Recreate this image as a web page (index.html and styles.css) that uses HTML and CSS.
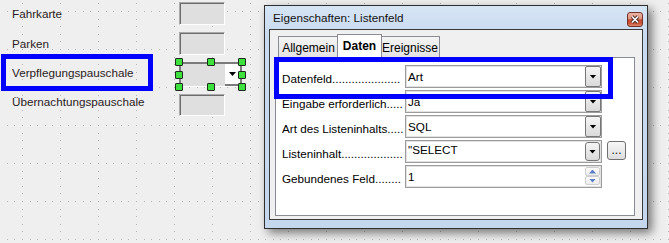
FILE: index.html
```html
<!DOCTYPE html>
<html lang="de">
<head>
<meta charset="utf-8">
<title>Eigenschaften: Listenfeld</title>
<link rel="stylesheet" href="styles.css">
</head>
<body>
<div class="canvas">
  <svg class="grid" width="669" height="243" aria-hidden="true">
    <defs>
      <pattern id="dots" patternUnits="userSpaceOnUse" x="22" y="11" width="38" height="38">
        <rect class="dot" x="0" y="0" width="1" height="1"/>
        <rect class="dot" x="8" y="0" width="1" height="1"/>
        <rect class="dot" x="15" y="0" width="1" height="1"/>
        <rect class="dot" x="23" y="0" width="1" height="1"/>
        <rect class="dot" x="30" y="0" width="1" height="1"/>
        <rect class="dot" x="0" y="8" width="1" height="1"/>
        <rect class="dot" x="0" y="15" width="1" height="1"/>
        <rect class="dot" x="0" y="23" width="1" height="1"/>
        <rect class="dot" x="0" y="30" width="1" height="1"/>
      </pattern>
    </defs>
    <rect width="669" height="243" fill="url(#dots)"/>
  </svg>

  <div class="form">
    <div class="lbl">Fahrkarte</div>
    <div class="field"></div>
    <div class="lbl">Parken</div>
    <div class="field"></div>
    <div class="lbl lbl-sel">Verpflegungspauschale</div>
    <div class="sel-wrap">
      <div class="sel"><div class="sel-btn"><i class="tri"></i></div></div>
      <span class="h h1"></span><span class="h h2"></span><span class="h h3"></span>
      <span class="h h4"></span><span class="h h5"></span>
      <span class="h h6"></span><span class="h h7"></span><span class="h h8"></span>
    </div>
    <div class="lbl lbl-top">Übernachtungspauschale</div>
    <div class="field"></div>
  </div>

  <div class="window">
    <div class="titlebar">
      <span class="title">Eigenschaften: Listenfeld</span>
      <span class="close">
        <svg width="10" height="9" viewBox="0 0 10 9">
          <path d="M2 1.5 L8 7.5 M8 1.5 L2 7.5" stroke="#4a2a24" stroke-width="3.4" fill="none"/>
          <path d="M2 1.5 L8 7.5 M8 1.5 L2 7.5" stroke="#ffffff" stroke-width="1.6" fill="none"/>
        </svg>
      </span>
    </div>
    <div class="client">
      <div class="tabs">
        <div class="tab tab-a">Allgemein</div>
        <div class="tab active">Daten</div>
        <div class="tab tab-e">Ereignisse</div>
      </div>
      <div class="page">
        <div class="row">
          <span class="plabel">Datenfeld.....................</span>
          <div class="combo"><span class="val">Art</span><span class="dd"><i class="tri"></i></span></div>
        </div>
        <div class="row">
          <span class="plabel">Eingabe erforderlich.....</span>
          <div class="combo"><span class="val">Ja</span><span class="dd"><i class="tri"></i></span></div>
        </div>
        <div class="row">
          <span class="plabel">Art des Listeninhalts.....</span>
          <div class="combo"><span class="val">SQL</span><span class="dd"><i class="tri"></i></span></div>
        </div>
        <div class="row">
          <span class="plabel">Listeninhalt...................</span>
          <div class="combo multi"><span class="val">"SELECT
"Art", "ID" FROM "Art" ORDER BY "Art"</span><span class="dd dd-round"><i class="tri"></i></span></div>
          <span class="more">...</span>
        </div>
        <div class="row">
          <span class="plabel">Gebundenes Feld........</span>
          <div class="combo"><span class="val">1</span><span class="spin"><span class="sb"><i class="up"></i></span><span class="sb"><i class="down"></i></span></span></div>
        </div>
      </div>
    </div>
  </div>

  <div class="mark mark-left"></div>
  <div class="mark mark-right"></div>
</div>
</body>
</html>
```

FILE: styles.css
```css
* { box-sizing: border-box; }
html, body { margin: 0; padding: 0; }
body {
  background: #efefef;
  font-family: "Liberation Sans", Arial, sans-serif;
  font-size: 11.7px;
  color: #000;
}
.canvas {
  position: relative;
  width: 669px;
  height: 243px;
  overflow: hidden;
  background: #efefef;
}
.grid { position: absolute; left: 0; top: 0; }
.grid .dot { fill: #b4b4b4; }

/* form designer controls */
.form {
  position: relative;
  display: grid;
  grid-template-columns: 167px 63px;
  grid-template-rows: 23px 23px 25px 22px;
  row-gap: 7px;
  padding: 2px 0 0 12px;
  width: 260px;
}
.lbl {
  align-self: center;
  line-height: 14px;
  color: #2a1c23;
  white-space: nowrap;
}
.lbl-sel { margin-bottom: 3px; }
.lbl-top { align-self: start; margin-top: 1px; }
.field {
  width: 46px;
  background: #dfdfdf;
  border-top: 1px solid #a9a9a9;
  border-left: 1px solid #a9a9a9;
  border-right: 1px solid #fff;
  border-bottom: 1px solid #fff;
  box-shadow: inset 1px 1px 0 #6c6c6c;
}
.sel-wrap { position: relative; width: 63px; height: 25px; }
.sel {
  height: 100%;
  display: flex;
  justify-content: flex-end;
  background: #dfdfdf;
  border-top: 2px solid #7b7b7b;
  border-left: 2px solid #7b7b7b;
  border-right: 2px solid #7b7b7b;
  border-bottom: 1px solid #fff;
}
.sel-btn {
  width: 15px;
  background: #fff;
  border-bottom: 2px solid #7b7b7b;
  display: flex;
  align-items: center;
  justify-content: center;
}
.tri {
  display: block;
  width: 7px;
  height: 4px;
  background: #000;
  clip-path: polygon(0 0, 100% 0, 50% 100%);
}
.h {
  position: absolute;
  width: 8px;
  height: 8px;
  background: #3ee03e;
  border: 1px solid #1c2a1c;
  border-radius: 1px;
}
.h1 { left: -4px; top: -4px; }
.h2 { left: 28px; top: -4px; }
.h3 { left: 59px; top: -4px; }
.h4 { left: -4px; top: 9px; }
.h5 { left: 59px; top: 9px; }
.h6 { left: -4px; top: 21px; }
.h7 { left: 28px; top: 21px; }
.h8 { left: 59px; top: 21px; }

/* dialog window */
.window {
  position: absolute;
  left: 264px;
  top: 5px;
  width: 384px;
  height: 224px;
  border: 1px solid #2f2f2f;
  background: linear-gradient(#d6e5f5, #c8daef 30px, #c4d7ed);
  padding: 0 4px 8px 4px;
  box-shadow: 4px 4px 9px rgba(0, 0, 0, 0.5);
  display: flex;
  flex-direction: column;
}
.titlebar {
  height: 23px;
  flex: none;
  display: flex;
  align-items: center;
  justify-content: space-between;
  padding-left: 4px;
}
.title { line-height: 14px; color: #111; }
.close {
  align-self: flex-end;
  margin-bottom: 2px;
  width: 16px;
  height: 15px;
  border: 1px solid #71332a;
  border-radius: 3px;
  background: linear-gradient(#ecb4a4 0%, #e0937d 45%, #c5472c 52%, #cc5637 80%, #de8b70 100%);
  display: flex;
  align-items: center;
  justify-content: center;
}
.close svg { display: block; }
.client {
  flex: 1;
  border: 1px solid #3a3a3a;
  background: #f0f0f0;
  padding: 4px 0 3px 5px;
  display: flex;
  flex-direction: column;
}
.tabs {
  height: 23px;
  flex: none;
  display: flex;
  align-items: flex-end;
  padding-left: 3px;
}
.tab {
  height: 21px;
  border: 1px solid #898c95;
  border-bottom: 0;
  background: linear-gradient(#f4f4f4, #e3e3e3);
  font-size: 12px;
  line-height: 14px;
  padding-top: 4px;
  text-align: center;
  white-space: nowrap;
}
.tab-a { width: 61px; }
.tab-e { width: 60px; }
.tab.active {
  position: relative;
  width: 45px;
  height: 24px;
  margin: 0 -2px -1px;
  background: #fff;
  font-weight: bold;
}
.page {
  width: 360px;
  height: 159px;
  border: 1px solid #898c95;
  background: #fff;
  padding: 7px 0 0 6px;
  display: flex;
  flex-direction: column;
  gap: 2px;
}
.row { display: flex; height: 23px; align-items: flex-start; }
.plabel {
  flex: none;
  width: 122px;
  margin-right: 1px;
  overflow: hidden;
  white-space: nowrap;
  line-height: 23px;
  padding-top: 2px;
}
.combo {
  flex: none;
  width: 197px;
  height: 23px;
  display: flex;
  border: 1px solid #9c9c9c;
  box-shadow: inset 0 0 0 1px #e2e2e2;
  background: #fff;
}
.val {
  flex: 1;
  padding: 1px 0 0 2px;
  line-height: 20px;
  white-space: pre;
  overflow: hidden;
}
.combo.multi .val { line-height: 14px; padding-top: 2px; height: 19px; }
.dd {
  flex: none;
  width: 16px;
  border: 1px solid #777;
  border-radius: 2px;
  background: linear-gradient(#f5f5f5, #dadada);
  display: flex;
  align-items: center;
  justify-content: center;
}
.dd-round {
  width: 15px;
  margin: 1px 1px 1px 0;
  border-radius: 3px;
}
.spin {
  flex: none;
  width: 15px;
  margin: 1px 1px 0 0;
  display: flex;
  flex-direction: column;
}
.sb {
  height: 9px;
  border: 1px solid #cfcfcf;
  border-radius: 2px;
  background: linear-gradient(#fbfbfb, #ececec);
  display: flex;
  align-items: center;
  justify-content: center;
}
.up, .down { display: block; width: 7px; height: 4px; background: #5a7ec6; }
.up { clip-path: polygon(50% 0, 100% 100%, 0 100%); }
.down { clip-path: polygon(0 0, 100% 0, 50% 100%); }
.more {
  flex: none;
  width: 19px;
  height: 19px;
  margin: 1px 0 0 5px;
  border: 1px solid #707070;
  border-radius: 3px;
  background: linear-gradient(#f7f7f7, #dedede);
  font-size: 12px;
  line-height: 14px;
  padding-top: 1px;
  text-align: center;
  color: #222;
}

/* annotation frames */
.mark { position: absolute; border: 5px solid #0000ff; }
.mark-left { left: 1px; top: 54px; width: 152px; height: 37px; }
.mark-right { left: 274px; top: 57px; width: 339px; height: 42px; }
```
